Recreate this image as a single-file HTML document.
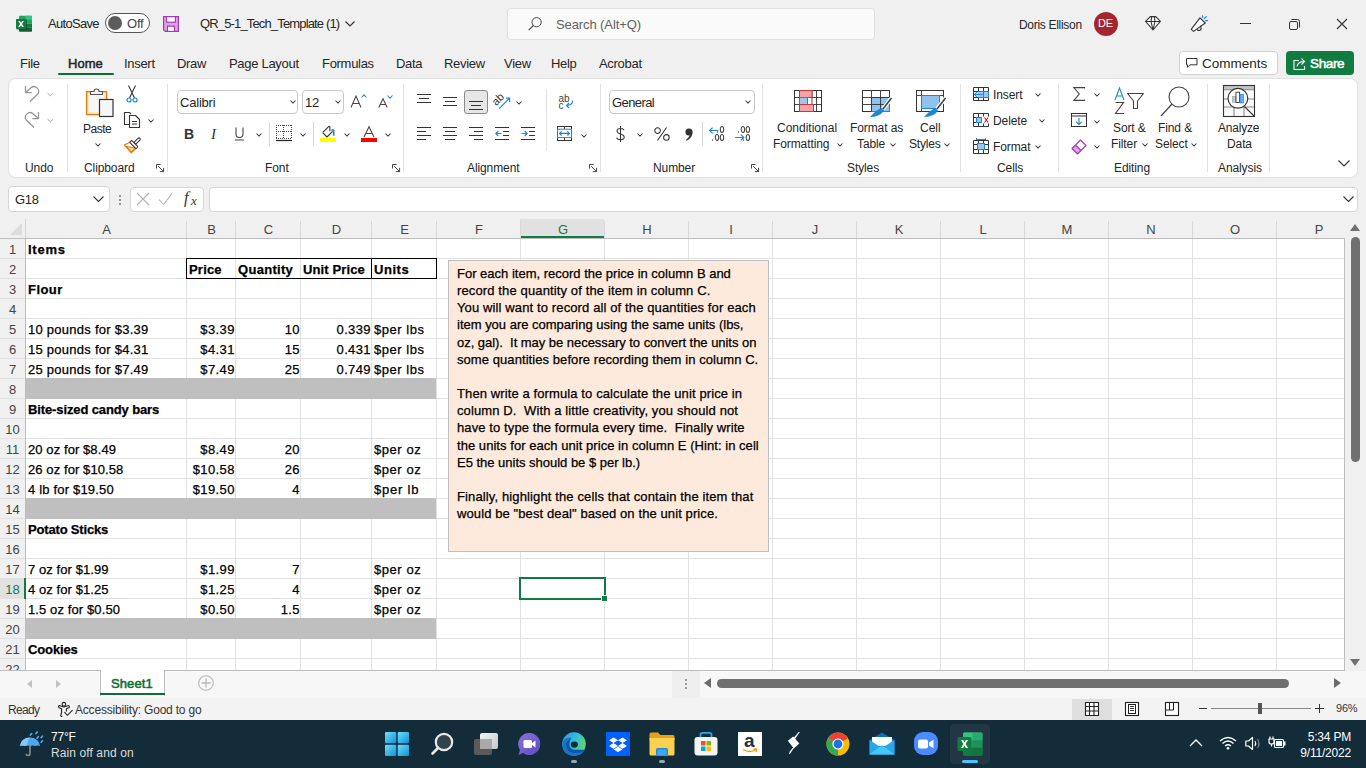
<!DOCTYPE html>
<html><head><meta charset="utf-8"><style>
*{margin:0;padding:0;box-sizing:border-box}
html,body{width:1366px;height:768px;overflow:hidden;background:#f0f0f0;font-family:"Liberation Sans", sans-serif;}
.a{position:absolute}
.t{position:absolute;white-space:pre;line-height:1}
.k{-webkit-text-stroke:0.25px currentColor}
svg{position:absolute;overflow:visible}
</style></head>
<body>
<svg style="left:15px;top:15px" width="18" height="18" viewBox="0 0 18 18"><rect x="4" y="0.8" width="13" height="4" rx="0.8" fill="#21a366"/><rect x="10.5" y="0.8" width="6.5" height="4" rx="0.5" fill="#33c481"/><rect x="4" y="4.8" width="13" height="4" fill="#21a366"/><rect x="4" y="8.8" width="13" height="4" fill="#107c41"/><rect x="4" y="12.8" width="13" height="4" rx="0.8" fill="#185c37"/><rect x="1.5" y="4.3" width="10.5" height="10.5" rx="0.8" fill="#0b3d21" opacity="0.5"/><rect x="1" y="3.9" width="10" height="10" rx="0.8" fill="#107c41"/><path d="M3.2 5.9 H5 L6 7.9 L7.1 5.9 H8.9 L7 8.9 L8.9 11.9 H7.1 L6 9.9 L5 11.9 H3.2 L5.1 8.9 Z" fill="#fff"/></svg>
<div class="t" style="left:48px;top:17px;font-size:13px;color:#262626;font-weight:400;letter-spacing:-0.7px">AutoSave</div>
<div class="a" style="left:105px;top:13px;width:45px;height:20px;border:1px solid #555;border-radius:10px;background:#fff"></div>
<div class="a" style="left:108px;top:16px;width:14px;height:14px;border-radius:7px;background:#5c5c5c"></div>
<div class="t" style="left:127px;top:17px;font-size:13px;color:#444;font-weight:400;letter-spacing:-0.2px">Off</div>
<svg style="left:163px;top:16px" width="16" height="16" viewBox="0 0 16 16"><path d="M0.6 0.6 H15.4 V15.4 H2.2 L0.6 13.8 Z" fill="#dca3e4" stroke="#a634b4" stroke-width="1.2"/><rect x="3.6" y="0.6" width="8.8" height="5.6" fill="#fafafa" stroke="#a634b4" stroke-width="1.1"/><rect x="4.5" y="10.2" width="7" height="5.2" fill="#fafafa" stroke="#a634b4" stroke-width="1.1"/></svg>
<div class="t" style="left:200px;top:17px;font-size:13px;color:#262626;font-weight:400;letter-spacing:-0.85px">QR_5-1_Tech_Template (1)</div>
<svg style="left:345px;top:21px" width="10" height="6" viewBox="0 0 10 6"><path d="M0.5 0.5 L5 5 L9.5 0.5" fill="none" stroke="#333" stroke-width="1.2"/></svg>
<div class="a" style="left:507px;top:8px;width:368px;height:32px;border:1px solid #e0e0e0;border-radius:4px;background:#fafafa"></div>
<svg style="left:528px;top:16px" width="14" height="15" viewBox="0 0 14 15"><circle cx="8.6" cy="6.2" r="4.6" fill="none" stroke="#444" stroke-width="1"/><path d="M5.4 9.5 L0.7 14.2" stroke="#444" stroke-width="1.1"/></svg>
<div class="t" style="left:556px;top:18px;font-size:13px;color:#616161;font-weight:400;letter-spacing:-0.1px">Search (Alt+Q)</div>
<div class="t" style="left:1019px;top:19px;font-size:12px;color:#262626;font-weight:400;letter-spacing:-0.3px">Doris Ellison</div>
<div class="a" style="left:1094px;top:12px;width:24px;height:24px;border-radius:12px;background:#a4262c"></div>
<div class="t" style="left:1098px;top:18px;font-size:11px;color:#fff;font-weight:400;letter-spacing:-0.3px">DE</div>
<svg style="left:1145px;top:16px" width="16" height="15" viewBox="0 0 16 15"><path d="M5.2 0.6 H10.8 L15.4 5.4 L8 14 L0.6 5.4 Z M0.6 5.4 H15.4 M6.8 0.6 L6 5.4 L8 14 M9.2 0.6 L10 5.4 L8 14" fill="#fafafa" stroke="#333" stroke-width="1.05" stroke-linejoin="round"/></svg>
<svg style="left:1190px;top:15px" width="19" height="18" viewBox="0 0 19 18"><path d="M1.2 14.4 L10 2.8 L15.3 8 L3.6 16.4 Z" fill="#fafafa" stroke="#333" stroke-width="1.1" stroke-linejoin="round"/><path d="M7 14.2 A2.1 2.1 0 0 0 10.9 12.4 L10.5 10.6" fill="none" stroke="#333" stroke-width="1.1"/><path d="M12.5 0.9 L12.7 2.3 M14.3 3.7 L16.3 1.7 M15.8 5.6 H17.6" stroke="#1b7fd6" stroke-width="1.2" stroke-linecap="round"/></svg>
<div class="a" style="left:1240px;top:23px;width:11px;height:1px;background:#333"></div>
<svg style="left:1289px;top:19px" width="11" height="11" viewBox="0 0 11 11"><rect x="0.5" y="2.5" width="8" height="8" rx="1.5" fill="none" stroke="#333" stroke-width="1"/><path d="M2.5 0.5 H8.5 Q10.5 0.5 10.5 2.5 V8.5" fill="none" stroke="#333" stroke-width="1"/></svg>
<svg style="left:1336px;top:18px" width="12" height="12" viewBox="0 0 12 12"><path d="M1 1 L11 11 M11 1 L1 11" stroke="#333" stroke-width="1.1"/></svg>
<div class="t" style="left:20px;top:57px;font-size:13px;color:#262626;font-weight:400;letter-spacing:-0.3px">File</div>
<div class="t" style="left:68px;top:57px;font-size:13px;color:#262626;font-weight:400;letter-spacing:0.05px;-webkit-text-stroke:0.5px #262626">Home</div>
<div class="t" style="left:124px;top:57px;font-size:13px;color:#262626;font-weight:400;letter-spacing:-0.3px">Insert</div>
<div class="t" style="left:177px;top:57px;font-size:13px;color:#262626;font-weight:400;letter-spacing:-0.3px">Draw</div>
<div class="t" style="left:229px;top:57px;font-size:13px;color:#262626;font-weight:400;letter-spacing:-0.3px">Page Layout</div>
<div class="t" style="left:322px;top:57px;font-size:13px;color:#262626;font-weight:400;letter-spacing:-0.3px">Formulas</div>
<div class="t" style="left:396px;top:57px;font-size:13px;color:#262626;font-weight:400;letter-spacing:-0.3px">Data</div>
<div class="t" style="left:444px;top:57px;font-size:13px;color:#262626;font-weight:400;letter-spacing:-0.3px">Review</div>
<div class="t" style="left:504px;top:57px;font-size:13px;color:#262626;font-weight:400;letter-spacing:-0.3px">View</div>
<div class="t" style="left:551px;top:57px;font-size:13px;color:#262626;font-weight:400;letter-spacing:-0.3px">Help</div>
<div class="t" style="left:599px;top:57px;font-size:13px;color:#262626;font-weight:400;letter-spacing:-0.3px">Acrobat</div>
<div class="a" style="left:58px;top:73px;width:56px;height:2px;background:#0e6e37;border-radius:1px"></div>
<div class="a" style="left:1179px;top:51px;width:99px;height:24px;border:1px solid #d1d1d1;border-radius:4px;background:#fff"></div>
<svg style="left:1186px;top:58px" width="12" height="10" viewBox="0 0 12 10"><path d="M0.5 0.5 H11 V6.8 H4 L1.5 9.2 V6.8 H0.5 Z" fill="none" stroke="#333" stroke-width="1" stroke-linejoin="round"/></svg>
<div class="t" style="left:1202px;top:57px;font-size:13.5px;color:#262626;font-weight:400;letter-spacing:0px">Comments</div>
<div class="a" style="left:1286px;top:51px;width:68px;height:24px;border-radius:4px;background:#107c41"></div>
<svg style="left:1293px;top:57px" width="14" height="13" viewBox="0 0 14 13"><path d="M6 3.5 H1 V12.5 H11.5 V9" fill="none" stroke="#fff" stroke-width="1.1"/><path d="M4 9.5 Q5 4.5 11 4.5 M8.5 1.5 L11.5 4.5 L8.5 7.5" fill="none" stroke="#fff" stroke-width="1.1"/></svg>
<div class="t" style="left:1310px;top:57px;font-size:13.5px;color:#fff;font-weight:400;letter-spacing:-0.35px;-webkit-text-stroke:0.5px #fff">Share</div>
<div class="a" style="left:8px;top:78px;width:1350px;height:100px;border:1px solid #e1e1e1;border-radius:8px;background:#fff"></div>
<div class="a" style="left:67px;top:84px;width:1px;height:88px;background:#e1e1e1"></div>
<div class="a" style="left:167px;top:84px;width:1px;height:88px;background:#e1e1e1"></div>
<div class="a" style="left:403px;top:84px;width:1px;height:88px;background:#e1e1e1"></div>
<div class="a" style="left:600px;top:84px;width:1px;height:88px;background:#e1e1e1"></div>
<div class="a" style="left:762px;top:84px;width:1px;height:88px;background:#e1e1e1"></div>
<div class="a" style="left:960px;top:84px;width:1px;height:88px;background:#e1e1e1"></div>
<div class="a" style="left:1058px;top:84px;width:1px;height:88px;background:#e1e1e1"></div>
<div class="a" style="left:1207px;top:84px;width:1px;height:88px;background:#e1e1e1"></div>
<div class="a" style="left:1269px;top:84px;width:1px;height:88px;background:#e1e1e1"></div>
<svg style="left:20px;top:82px" width="40" height="50" viewBox="0 0 40 50"><path d="M5.5 4 V10.5 H11.7 M5.5 10.5 L11 5.7 A4.7 4.7 0 0 1 17.6 12.3 L10 19.5 M18.5 30 V36.5 H12.3 M18.5 36.5 L13 31.7 A4.7 4.7 0 0 0 6.4 38.3 L14 45.5" fill="none" stroke="#959595" stroke-width="1.25"/><path d="M27.5 11.2 L30.3 13.8 L33.1 11.2 M27.5 37.2 L30.3 39.8 L33.1 37.2" fill="none" stroke="#a0a0a0" stroke-width="0.9"/></svg>
<svg style="left:85px;top:86px" width="29" height="32" viewBox="0 0 29 32"><rect x="1.6" y="5.6" width="20" height="23" fill="#fbe7a8" stroke="#e8780f" stroke-width="1.3"/><rect x="3.5" y="7.5" width="16" height="19" fill="#f7f7f7"/><path d="M5.5 8.5 V5.5 H9 A2.5 2.5 0 0 1 14 5.5 H17.5 V8.5 Z" fill="#f7f7f7" stroke="#555" stroke-width="1.1" stroke-linejoin="round"/><rect x="14.5" y="13.5" width="13.5" height="17" fill="#f7f7f7" stroke="#333" stroke-width="1.2"/></svg>
<div class="t" style="left:83px;top:123px;font-size:12px;color:#262626;font-weight:400;letter-spacing:-0.5px">Paste</div>
<svg style="left:94.5px;top:143px" width="6" height="4.0" viewBox="0 0 6 4.0"><path d="M0.5 0.5 L3.0 3.0 L5.5 0.5" fill="none" stroke="#333" stroke-width="1.05"/></svg>
<svg style="left:126px;top:85px" width="12" height="18" viewBox="0 0 12 18"><path d="M2.5 0.5 L8.5 13 M9.5 0.5 L3.5 13" stroke="#333" stroke-width="1.1"/><circle cx="3" cy="15" r="2" fill="#fff" stroke="#1c86d4" stroke-width="1.2"/><circle cx="9" cy="15" r="2" fill="#fff" stroke="#1c86d4" stroke-width="1.2"/></svg>
<svg style="left:123px;top:111px" width="18" height="18" viewBox="0 0 18 18"><path d="M6.5 13.5 H1.5 V1.5 H6.5 L8 3" fill="none" stroke="#333" stroke-width="1.1"/><path d="M6.5 4.5 H12.5 L16.5 8.5 V16.5 H6.5 Z" fill="#fff" stroke="#333" stroke-width="1.1" stroke-linejoin="round"/><path d="M9 10.5 H14 M9 13 H14" stroke="#333" stroke-width="1"/></svg>
<svg style="left:147.5px;top:119px" width="6" height="4.0" viewBox="0 0 6 4.0"><path d="M0.5 0.5 L3.0 3.0 L5.5 0.5" fill="none" stroke="#333" stroke-width="1.05"/></svg>
<svg style="left:123px;top:137px" width="18" height="17" viewBox="0 0 18 17"><path d="M1.3 8 L7.9 4.7 L13.5 10.9 L8.2 15.7 Z" fill="#fff" stroke="#e8780f" stroke-width="1.2" stroke-linejoin="round"/><path d="M3.2 9.4 Q8 10 12.4 11.3 L8.2 15 Z" fill="#fbe08a" stroke="#e8780f" stroke-width="1.05" stroke-linejoin="round"/><rect x="-3.6" y="-1.3" width="7.2" height="2.6" rx="1.3" transform="translate(14.3 3.9) rotate(-45)" fill="#fff" stroke="#333" stroke-width="1.05"/><rect x="-4.6" y="-1.4" width="9.2" height="2.8" rx="0.9" transform="translate(10.8 7.6) rotate(45)" fill="#fff" stroke="#333" stroke-width="1.05"/></svg>
<svg style="left:156px;top:164px" width="9" height="9" viewBox="0 0 9 9"><path d="M0.5 4.5 V0.5 H4.5 M2.2 2.2 L7.6 7.6 M7.6 3.8 V7.6 H3.8" fill="none" stroke="#444" stroke-width="1"/></svg>
<div class="a" style="left:177px;top:90px;width:121px;height:24px;border:1px solid #c8c8c8;border-radius:4px;background:#fff"></div>
<div class="t" style="left:180px;top:96px;font-size:13px;color:#262626;font-weight:400;letter-spacing:-0.2px">Calibri</div>
<svg style="left:289.5px;top:100px" width="6" height="4.0" viewBox="0 0 6 4.0"><path d="M0.5 0.5 L3.0 3.0 L5.5 0.5" fill="none" stroke="#333" stroke-width="1.05"/></svg>
<div class="a" style="left:302px;top:90px;width:42px;height:24px;border:1px solid #c8c8c8;border-radius:4px;background:#fff"></div>
<div class="t" style="left:305px;top:96px;font-size:13px;color:#262626;font-weight:400;letter-spacing:-0.3px">12</div>
<svg style="left:334.5px;top:100px" width="6" height="4.0" viewBox="0 0 6 4.0"><path d="M0.5 0.5 L3.0 3.0 L5.5 0.5" fill="none" stroke="#333" stroke-width="1.05"/></svg>
<svg style="left:350px;top:95px" width="13" height="13" viewBox="0 0 13 13"><path d="M1 12.5 L6 1 L11 12.5 M2.8 8.5 H9.2" fill="none" stroke="#444" stroke-width="1.05"/></svg>
<svg style="left:361px;top:94px" width="6" height="4" viewBox="0 0 6 4"><path d="M0.5 3.5 L3 0.8 L5.5 3.5" fill="none" stroke="#1c86d4" stroke-width="1.1"/></svg>
<svg style="left:378px;top:98px" width="11" height="10" viewBox="0 0 11 10"><path d="M0.8 9.5 L5 0.8 L9.2 9.5 M2.3 6.5 H7.7" fill="none" stroke="#444" stroke-width="1.05"/></svg>
<svg style="left:387px;top:95px" width="6" height="4" viewBox="0 0 6 4"><path d="M0.5 0.5 L3 3.2 L5.5 0.5" fill="none" stroke="#1c86d4" stroke-width="1.1"/></svg>
<div class="t" style="left:184px;top:127px;font-size:14px;color:#333;font-weight:700;">B</div>
<div class="t" style="left:211px;top:127px;font-size:15px;color:#333;font-weight:400;font-family:'Liberation Serif';font-style:italic">I</div>
<svg style="left:234px;top:127px" width="11" height="14" viewBox="0 0 11 14"><path d="M2 0.5 V7 Q2 10.5 5.5 10.5 Q9 10.5 9 7 V0.5 M1 13 H10" fill="none" stroke="#444" stroke-width="1.1"/></svg>
<svg style="left:255.5px;top:133px" width="6" height="4.0" viewBox="0 0 6 4.0"><path d="M0.5 0.5 L3.0 3.0 L5.5 0.5" fill="none" stroke="#333" stroke-width="1.05"/></svg>
<div class="a" style="left:269px;top:122px;width:1px;height:24px;background:#d6d6d6"></div>
<svg style="left:276px;top:125px" width="16" height="17" viewBox="0 0 16 17"><path d="M0 0.5 H16 M0 6.5 H16 M0 13.5 H16 M0.5 0 V14 M7.5 0 V14 M15.5 0 V14" fill="none" stroke="#444" stroke-width="1" stroke-dasharray="1 1"/><path d="M0 15.5 H16" stroke="#222" stroke-width="1.2"/></svg>
<svg style="left:299.5px;top:133px" width="6" height="4.0" viewBox="0 0 6 4.0"><path d="M0.5 0.5 L3.0 3.0 L5.5 0.5" fill="none" stroke="#333" stroke-width="1.05"/></svg>
<div class="a" style="left:313px;top:122px;width:1px;height:24px;background:#d6d6d6"></div>
<svg style="left:320px;top:124px" width="17" height="18" viewBox="0 0 17 18"><path d="M2.6 8.6 L8.6 2.6 Q9.7 1.6 9.9 3.2 V7.2 M8.6 2.6 M2.6 8.6 L7 13 L12.6 7.4" fill="#fafafa" stroke="#333" stroke-width="1.1" stroke-linejoin="round"/><path d="M11.6 6.6 Q12.8 4.6 13.8 6.8 V11.8" fill="none" stroke="#1c86d4" stroke-width="1.5"/><rect x="0" y="14" width="16" height="4" fill="#ffff00"/></svg>
<svg style="left:343.5px;top:133px" width="6" height="4.0" viewBox="0 0 6 4.0"><path d="M0.5 0.5 L3.0 3.0 L5.5 0.5" fill="none" stroke="#333" stroke-width="1.05"/></svg>
<svg style="left:363px;top:126px" width="12" height="12" viewBox="0 0 12 12"><path d="M1 11 L6 0.8 L11 11 M2.8 7.5 H9.2" fill="none" stroke="#444" stroke-width="1.05"/></svg>
<div class="a" style="left:361px;top:138px;width:16px;height:4px;background:#f00"></div>
<svg style="left:384.5px;top:133px" width="6" height="4.0" viewBox="0 0 6 4.0"><path d="M0.5 0.5 L3.0 3.0 L5.5 0.5" fill="none" stroke="#333" stroke-width="1.05"/></svg>
<svg style="left:392px;top:164px" width="9" height="9" viewBox="0 0 9 9"><path d="M0.5 4.5 V0.5 H4.5 M2.2 2.2 L7.6 7.6 M7.6 3.8 V7.6 H3.8" fill="none" stroke="#444" stroke-width="1"/></svg>
<div class="a" style="left:417px;top:94px;width:14px;height:1px;background:#333"></div>
<div class="a" style="left:419px;top:98px;width:10px;height:1px;background:#333"></div>
<div class="a" style="left:417px;top:102px;width:14px;height:1px;background:#333"></div>
<div class="a" style="left:443px;top:97px;width:14px;height:1px;background:#333"></div>
<div class="a" style="left:445px;top:101px;width:10px;height:1px;background:#333"></div>
<div class="a" style="left:443px;top:105px;width:14px;height:1px;background:#333"></div>
<div class="a" style="left:464px;top:90px;width:24px;height:24px;border:1px solid #8a8a8a;border-radius:3px;background:#e6e6e6"></div>
<div class="a" style="left:469px;top:101px;width:14px;height:1px;background:#333"></div>
<div class="a" style="left:471px;top:105px;width:10px;height:1px;background:#333"></div>
<div class="a" style="left:469px;top:109px;width:14px;height:1px;background:#333"></div>
<svg style="left:494px;top:93px" width="18" height="18" viewBox="0 0 18 18"><text x="2.2" y="13.2" font-size="11" font-family="Liberation Sans" fill="#333" transform="rotate(-45 2.2 13.2)">ab</text><path d="M5.2 15.6 L15.4 5.4 M11.9 5.2 H15.6 V8.9" fill="none" stroke="#1c86d4" stroke-width="1.2"/></svg>
<svg style="left:515.5px;top:101px" width="6" height="4.0" viewBox="0 0 6 4.0"><path d="M0.5 0.5 L3.0 3.0 L5.5 0.5" fill="none" stroke="#333" stroke-width="1.05"/></svg>
<div class="a" style="left:417px;top:127px;width:14px;height:1px;background:#333"></div>
<div class="a" style="left:417px;top:131px;width:9px;height:1px;background:#333"></div>
<div class="a" style="left:417px;top:135px;width:14px;height:1px;background:#333"></div>
<div class="a" style="left:417px;top:139px;width:9px;height:1px;background:#333"></div>
<div class="a" style="left:443px;top:127px;width:14px;height:1px;background:#333"></div>
<div class="a" style="left:445px;top:131px;width:10px;height:1px;background:#333"></div>
<div class="a" style="left:443px;top:135px;width:14px;height:1px;background:#333"></div>
<div class="a" style="left:445px;top:139px;width:10px;height:1px;background:#333"></div>
<div class="a" style="left:469px;top:127px;width:14px;height:1px;background:#333"></div>
<div class="a" style="left:474px;top:131px;width:9px;height:1px;background:#333"></div>
<div class="a" style="left:469px;top:135px;width:14px;height:1px;background:#333"></div>
<div class="a" style="left:474px;top:139px;width:9px;height:1px;background:#333"></div>
<div class="a" style="left:495px;top:127px;width:14px;height:1px;background:#333"></div>
<div class="a" style="left:495px;top:139px;width:14px;height:1px;background:#333"></div>
<div class="a" style="left:503px;top:131px;width:6px;height:1px;background:#333"></div>
<div class="a" style="left:503px;top:135px;width:6px;height:1px;background:#333"></div>
<svg style="left:495px;top:130px" width="7" height="7" viewBox="0 0 7 7"><path d="M6.5 3.5 H0.8 M3.3 1 L0.8 3.5 L3.3 6" fill="none" stroke="#1c86d4" stroke-width="1.1"/></svg>
<div class="a" style="left:521px;top:127px;width:14px;height:1px;background:#333"></div>
<div class="a" style="left:521px;top:139px;width:14px;height:1px;background:#333"></div>
<div class="a" style="left:529px;top:131px;width:6px;height:1px;background:#333"></div>
<div class="a" style="left:529px;top:135px;width:6px;height:1px;background:#333"></div>
<svg style="left:521px;top:130px" width="7" height="7" viewBox="0 0 7 7"><path d="M0.5 3.5 H6.2 M3.7 1 L6.2 3.5 L3.7 6" fill="none" stroke="#1c86d4" stroke-width="1.1"/></svg>
<div class="a" style="left:546px;top:89px;width:1px;height:62px;background:#e1e1e1"></div>
<svg style="left:558px;top:93px" width="16" height="18" viewBox="0 0 16 18"><text x="0.5" y="8.7" font-size="10" font-family="Liberation Sans" fill="#444">ab</text><text x="0.5" y="16" font-size="10" font-family="Liberation Sans" fill="#444">c</text><path d="M14.5 7.5 Q15 12 8.5 12.5 M11 10 L8.5 12.5 L11 15" fill="none" stroke="#1c86d4" stroke-width="1.1"/></svg>
<svg style="left:557px;top:126px" width="15" height="15" viewBox="0 0 15 15"><rect x="0.5" y="0.5" width="14" height="14" fill="#fff" stroke="#333" stroke-width="1"/><path d="M7.5 0.5 V3.5 M7.5 11.5 V14.5" stroke="#333"/><rect x="0.5" y="3.2" width="14" height="8.4" fill="#fff" stroke="#1c86d4" stroke-width="1"/><path d="M2.5 7.4 H12.5 M4.6 5.3 L2.5 7.4 L4.6 9.5 M10.4 5.3 L12.5 7.4 L10.4 9.5" fill="none" stroke="#1c86d4" stroke-width="1.1"/></svg>
<svg style="left:580.5px;top:134px" width="6" height="4.0" viewBox="0 0 6 4.0"><path d="M0.5 0.5 L3.0 3.0 L5.5 0.5" fill="none" stroke="#333" stroke-width="1.05"/></svg>
<svg style="left:589px;top:164px" width="9" height="9" viewBox="0 0 9 9"><path d="M0.5 4.5 V0.5 H4.5 M2.2 2.2 L7.6 7.6 M7.6 3.8 V7.6 H3.8" fill="none" stroke="#444" stroke-width="1"/></svg>
<div class="a" style="left:609px;top:90px;width:146px;height:24px;border:1px solid #c8c8c8;border-radius:4px;background:#fff"></div>
<div class="t" style="left:612px;top:96px;font-size:13px;color:#262626;font-weight:400;letter-spacing:-0.6px">General</div>
<svg style="left:744.5px;top:100px" width="6" height="4.0" viewBox="0 0 6 4.0"><path d="M0.5 0.5 L3.0 3.0 L5.5 0.5" fill="none" stroke="#333" stroke-width="1.05"/></svg>
<svg style="left:616px;top:126px" width="9" height="16" viewBox="0 0 9 16"><path d="M8 4.2 Q7.5 2.5 4.5 2.5 Q1 2.5 1 5 Q1 7 4.5 8 Q8.2 9 8.2 11.3 Q8.2 13.7 4.5 13.7 Q1.2 13.7 0.7 11.7 M4.5 0 V16" fill="none" stroke="#333" stroke-width="1.05"/></svg>
<svg style="left:636.5px;top:133px" width="6" height="4.0" viewBox="0 0 6 4.0"><path d="M0.5 0.5 L3.0 3.0 L5.5 0.5" fill="none" stroke="#333" stroke-width="1.05"/></svg>
<svg style="left:654px;top:127px" width="16" height="14" viewBox="0 0 16 14"><circle cx="3.6" cy="3.6" r="2.8" fill="none" stroke="#333" stroke-width="1.05"/><circle cx="12.4" cy="10.4" r="2.8" fill="none" stroke="#333" stroke-width="1.05"/><path d="M12.5 0.5 L3.5 13.5" stroke="#333" stroke-width="1.05"/></svg>
<svg style="left:685px;top:128px" width="8" height="13" viewBox="0 0 8 13"><circle cx="4" cy="4" r="3.6" fill="#333"/><path d="M7.4 4.5 Q7.5 10 1.5 12.8 L1 12 Q4.5 9.5 4.8 6.5 Z" fill="#333"/></svg>
<div class="a" style="left:702px;top:122px;width:1px;height:24px;background:#d6d6d6"></div>
<svg style="left:708px;top:125px" width="18" height="17" viewBox="0 0 18 17"><g fill="none" stroke="#444" stroke-width="1.05"><ellipse cx="14" cy="4.4" rx="1.7" ry="3"/><ellipse cx="9" cy="12.4" rx="1.7" ry="3"/><ellipse cx="14" cy="12.4" rx="1.7" ry="3"/></g><circle cx="9.6" cy="7" r="0.65" fill="#444"/><circle cx="4.5" cy="15" r="0.65" fill="#444"/><path d="M10.2 5.5 H1.6 M4.6 2.6 L1.6 5.5 L4.6 8.4" fill="none" stroke="#1c86d4" stroke-width="1.2"/></svg>
<svg style="left:734px;top:125px" width="18" height="17" viewBox="0 0 18 17"><g fill="none" stroke="#444" stroke-width="1.05"><ellipse cx="8.9" cy="4.4" rx="1.7" ry="3"/><ellipse cx="13.9" cy="4.4" rx="1.7" ry="3"/><ellipse cx="13.9" cy="12.4" rx="1.7" ry="3"/></g><circle cx="4.4" cy="7" r="0.65" fill="#444"/><circle cx="9.5" cy="15" r="0.65" fill="#444"/><path d="M1.1 12.5 H9.8 M6.8 9.6 L9.8 12.5 L6.8 15.4" fill="none" stroke="#1c86d4" stroke-width="1.2"/></svg>
<svg style="left:751px;top:164px" width="9" height="9" viewBox="0 0 9 9"><path d="M0.5 4.5 V0.5 H4.5 M2.2 2.2 L7.6 7.6 M7.6 3.8 V7.6 H3.8" fill="none" stroke="#444" stroke-width="1"/></svg>
<svg style="left:794px;top:90px" width="28" height="22" viewBox="0 0 28 22"><rect x="0.5" y="0.5" width="27" height="21" fill="#fff" stroke="#333" stroke-width="1"/><path d="M0.5 7.5 H27.5 M0.5 14.5 H27.5 M5.5 0.5 V21.5 M18 0.5 V21.5 M22.5 0.5 V21.5" stroke="#333" stroke-width="0.9" fill="none"/><rect x="5.5" y="0.5" width="12.5" height="7" fill="#f4a3a8" stroke="#d13438" stroke-width="1"/><rect x="5.5" y="7.5" width="8" height="7" fill="#9ac8f0" stroke="#1c86d4" stroke-width="1"/><rect x="5.5" y="14.5" width="14" height="7" fill="#f4a3a8" stroke="#d13438" stroke-width="1"/></svg>
<div class="t" style="left:777px;top:122px;font-size:12px;color:#262626;font-weight:400;letter-spacing:0px">Conditional</div>
<div class="t" style="left:773px;top:138px;font-size:12px;color:#262626;font-weight:400;letter-spacing:-0.1px">Formatting</div>
<svg style="left:836.5px;top:143px" width="6" height="4.0" viewBox="0 0 6 4.0"><path d="M0.5 0.5 L3.0 3.0 L5.5 0.5" fill="none" stroke="#333" stroke-width="1.05"/></svg>
<svg style="left:862px;top:90px" width="31" height="28" viewBox="0 0 31 28"><rect x="0.5" y="0.5" width="27" height="21" fill="#fff" stroke="#333" stroke-width="1"/><rect x="9.5" y="7.5" width="18" height="14" fill="#8ec3f0" stroke="#1c86d4" stroke-width="1"/><path d="M0.5 7.5 H27.5 M0.5 14.5 H27.5 M9.5 0.5 V21.5 M18.5 0.5 V21.5" stroke="#333" stroke-width="0.9" fill="none"/><path d="M29.5 8 L21 19" stroke="#fff" stroke-width="4"/><path d="M29.5 8 L21 19" stroke="#444" stroke-width="1.6"/><path d="M20 18 Q15 19 8 27 Q17 27 22 21 Z" fill="#1c86d4"/></svg>
<div class="t" style="left:850px;top:122px;font-size:12px;color:#262626;font-weight:400;letter-spacing:-0.1px">Format as</div>
<div class="t" style="left:857px;top:138px;font-size:12px;color:#262626;font-weight:400;letter-spacing:-0.1px">Table</div>
<svg style="left:889.5px;top:143px" width="6" height="4.0" viewBox="0 0 6 4.0"><path d="M0.5 0.5 L3.0 3.0 L5.5 0.5" fill="none" stroke="#333" stroke-width="1.05"/></svg>
<svg style="left:916px;top:90px" width="31" height="28" viewBox="0 0 31 28"><rect x="0.5" y="0.5" width="27" height="21" fill="#fff" stroke="#333" stroke-width="1"/><path d="M0.5 5.5 H27.5 M5.5 0.5 V21.5" stroke="#333" stroke-width="0.9" fill="none"/><rect x="5.5" y="5.5" width="18" height="13" fill="#8ec3f0" stroke="#1c86d4" stroke-width="1"/><path d="M29.5 8 L21 19" stroke="#fff" stroke-width="4"/><path d="M29.5 8 L21 19" stroke="#444" stroke-width="1.6"/><path d="M20 18 Q15 19 8 27 Q17 27 22 21 Z" fill="#1c86d4"/></svg>
<div class="t" style="left:920px;top:122px;font-size:12px;color:#262626;font-weight:400;">Cell</div>
<div class="t" style="left:909px;top:138px;font-size:12px;color:#262626;font-weight:400;letter-spacing:-0.2px">Styles</div>
<svg style="left:943.5px;top:143px" width="6" height="4.0" viewBox="0 0 6 4.0"><path d="M0.5 0.5 L3.0 3.0 L5.5 0.5" fill="none" stroke="#333" stroke-width="1.05"/></svg>
<svg style="left:973px;top:87px" width="16" height="14" viewBox="0 0 16 14"><path d="M0.5 0.5 H15.5 V13.5 H0.5 Z M5.5 0.5 V4.5 M10.5 0.5 V4.5 M5.5 10.5 V13.5 M10.5 10.5 V13.5 M0.5 4.5 H5.5 M0.5 10.5 H15.5" fill="none" stroke="#333" stroke-width="1"/><rect x="5.5" y="4.5" width="10" height="6" fill="#9ac8f0" stroke="#1c86d4"/><path d="M10.5 4.5 V10.5" stroke="#1c86d4"/><rect x="1" y="5" width="4.5" height="5" fill="#fff"/><path d="M9.5 7.5 H1.5 M4.2 4.8 L1.5 7.5 L4.2 10.2" fill="none" stroke="#1c86d4" stroke-width="1.1"/></svg>
<div class="t" style="left:993px;top:89px;font-size:12px;color:#262626;font-weight:400;letter-spacing:-0.1px">Insert</div>
<svg style="left:1034.5px;top:93px" width="6" height="4.0" viewBox="0 0 6 4.0"><path d="M0.5 0.5 L3.0 3.0 L5.5 0.5" fill="none" stroke="#333" stroke-width="1.05"/></svg>
<svg style="left:973px;top:113px" width="16" height="14" viewBox="0 0 16 14"><path d="M0.5 0.5 H15.5 M0.5 13.5 H15.5 M0.5 0.5 V13.5 M5.5 0.5 V4.5 M10.5 0.5 V3.5 M5.5 9.5 V13.5 M10.5 10.5 V13.5 M0.5 4.5 H3.5 M0.5 9.5 H3.5 M15.5 0.5 V3.5 M15.5 10.5 V13.5" fill="none" stroke="#333" stroke-width="1"/><rect x="3.5" y="4.5" width="5" height="5" fill="#9ac8f0" stroke="#1c86d4"/><path d="M11.5 4.5 L15.2 9.5 M15.2 4.5 L11.5 9.5" stroke="#e81123" stroke-width="1.1"/></svg>
<div class="t" style="left:993px;top:115px;font-size:12px;color:#262626;font-weight:400;letter-spacing:-0.1px">Delete</div>
<svg style="left:1038.5px;top:119px" width="6" height="4.0" viewBox="0 0 6 4.0"><path d="M0.5 0.5 L3.0 3.0 L5.5 0.5" fill="none" stroke="#333" stroke-width="1.05"/></svg>
<svg style="left:973px;top:138px" width="16" height="16" viewBox="0 0 16 16"><path d="M3.5 0 V2.5 M12.5 0 V2.5 M3.5 1.5 H12.5" fill="none" stroke="#1c86d4" stroke-width="1"/><path d="M0.5 2.5 H15.5 V15.5 H0.5 Z M0.5 6.5 H15.5 M0.5 11.5 H15.5 M5.5 2.5 V15.5 M10.5 2.5 V15.5" fill="none" stroke="#333" stroke-width="1"/><rect x="4.5" y="5.5" width="7" height="6" fill="#9ac8f0" stroke="#1c86d4"/></svg>
<div class="t" style="left:993px;top:141px;font-size:12px;color:#262626;font-weight:400;letter-spacing:-0.1px">Format</div>
<svg style="left:1034.5px;top:145px" width="6" height="4.0" viewBox="0 0 6 4.0"><path d="M0.5 0.5 L3.0 3.0 L5.5 0.5" fill="none" stroke="#333" stroke-width="1.05"/></svg>
<svg style="left:1073px;top:87px" width="12" height="14" viewBox="0 0 12 14"><path d="M11.5 1.5 V0.6 H0.8 L6.3 7 L0.8 13.4 H11.5 V12.5" fill="none" stroke="#444" stroke-width="1.1" stroke-linejoin="miter"/></svg>
<svg style="left:1093.5px;top:93px" width="6" height="4.0" viewBox="0 0 6 4.0"><path d="M0.5 0.5 L3.0 3.0 L5.5 0.5" fill="none" stroke="#333" stroke-width="1.05"/></svg>
<svg style="left:1071px;top:113px" width="16" height="14" viewBox="0 0 16 14"><rect x="0.5" y="0.5" width="15" height="13" fill="#fff" stroke="#333"/><path d="M0.5 3 H15.5" stroke="#333"/><path d="M8 5 V11.5 M5.2 8.8 L8 11.5 L10.8 8.8" fill="none" stroke="#1c86d4" stroke-width="1.1"/></svg>
<svg style="left:1093.5px;top:120px" width="6" height="4.0" viewBox="0 0 6 4.0"><path d="M0.5 0.5 L3.0 3.0 L5.5 0.5" fill="none" stroke="#333" stroke-width="1.05"/></svg>
<svg style="left:1071px;top:139px" width="16" height="15" viewBox="0 0 16 15"><path d="M1 9.5 L4.5 6 L10 11.5 L6.5 15 Z" fill="#dba6e3"/><path d="M1 9.5 L9.5 1 L15 6.5 L6.5 15 Z M4.5 6 L10 11.5" fill="none" stroke="#a634b4" stroke-width="1.1" stroke-linejoin="round"/></svg>
<svg style="left:1093.5px;top:145px" width="6" height="4.0" viewBox="0 0 6 4.0"><path d="M0.5 0.5 L3.0 3.0 L5.5 0.5" fill="none" stroke="#333" stroke-width="1.05"/></svg>
<svg style="left:1114px;top:87px" width="31" height="28" viewBox="0 0 31 28"><path d="M1 13 L5.5 1 L10 13 M2.5 9 H8.5" fill="none" stroke="#1c86d4" stroke-width="1.1"/><path d="M1.5 15.5 H9.5 L1.5 26.5 H10" fill="none" stroke="#444" stroke-width="1.1"/><path d="M13.5 6.5 H29.5 L23.5 14 V21.5 H19.5 V14 Z" fill="#fff" stroke="#444" stroke-width="1.1" stroke-linejoin="round"/></svg>
<div class="t" style="left:1113px;top:122px;font-size:12px;color:#262626;font-weight:400;letter-spacing:-0.1px">Sort &amp;</div>
<div class="t" style="left:1111px;top:138px;font-size:12px;color:#262626;font-weight:400;letter-spacing:-0.1px">Filter</div>
<svg style="left:1141.5px;top:143px" width="6" height="4.0" viewBox="0 0 6 4.0"><path d="M0.5 0.5 L3.0 3.0 L5.5 0.5" fill="none" stroke="#333" stroke-width="1.05"/></svg>
<svg style="left:1160px;top:86px" width="31" height="31" viewBox="0 0 31 31"><circle cx="19" cy="11" r="10" fill="#fff" stroke="#444" stroke-width="1.1"/><path d="M12 18 L1 30" stroke="#444" stroke-width="1.2"/></svg>
<div class="t" style="left:1158px;top:122px;font-size:12px;color:#262626;font-weight:400;letter-spacing:-0.1px">Find &amp;</div>
<div class="t" style="left:1155px;top:138px;font-size:12px;color:#262626;font-weight:400;letter-spacing:-0.1px">Select</div>
<svg style="left:1190.5px;top:143px" width="6" height="4.0" viewBox="0 0 6 4.0"><path d="M0.5 0.5 L3.0 3.0 L5.5 0.5" fill="none" stroke="#333" stroke-width="1.05"/></svg>
<svg style="left:1223px;top:85px" width="32" height="32" viewBox="0 0 32 32"><rect x="0.5" y="0.5" width="31" height="31" fill="#fafafa"/><rect x="1" y="1" width="30" height="3.8" fill="#c4c4c4"/><path d="M0.5 4.8 H31.5 M0.5 14 H31.5 M0.5 22 H31.5 M11 22 V31.5 M21 22 V31.5" stroke="#8a8a8a" stroke-width="1.1"/><rect x="0.5" y="0.5" width="31" height="31" fill="none" stroke="#333" stroke-width="1.1"/><circle cx="14.9" cy="13.3" r="9.9" fill="#fff" stroke="#333" stroke-width="1.2"/><rect x="9.6" y="11.5" width="3.2" height="5.8" fill="#c8c8c8" stroke="#999" stroke-width="0.6"/><rect x="13" y="7.2" width="3.6" height="10.2" fill="#fff" stroke="#333" stroke-width="0.9"/><rect x="17.1" y="9.3" width="3.2" height="8.6" fill="#6cb2ec" stroke="#1c86d4" stroke-width="0.8"/><path d="M21.6 21.6 L31.4 31.4" stroke="#333" stroke-width="1.3"/></svg>
<div class="t" style="left:1218px;top:122px;font-size:12px;color:#262626;font-weight:400;letter-spacing:-0.2px">Analyze</div>
<div class="t" style="left:1227px;top:138px;font-size:12px;color:#262626;font-weight:400;letter-spacing:-0.1px">Data</div>
<svg style="left:1338px;top:160px" width="12" height="7" viewBox="0 0 12 7"><path d="M0.5 0.5 L6 6 L11.5 0.5" fill="none" stroke="#333" stroke-width="1.1"/></svg>
<div class="t" style="left:25px;top:162px;font-size:12px;color:#262626;font-weight:400;letter-spacing:-0.1px">Undo</div>
<div class="t" style="left:84px;top:162px;font-size:12px;color:#262626;font-weight:400;letter-spacing:-0.1px">Clipboard</div>
<div class="t" style="left:265px;top:162px;font-size:12px;color:#262626;font-weight:400;letter-spacing:-0.1px">Font</div>
<div class="t" style="left:467px;top:162px;font-size:12px;color:#262626;font-weight:400;letter-spacing:-0.1px">Alignment</div>
<div class="t" style="left:653px;top:162px;font-size:12px;color:#262626;font-weight:400;letter-spacing:-0.1px">Number</div>
<div class="t" style="left:847px;top:162px;font-size:12px;color:#262626;font-weight:400;letter-spacing:-0.1px">Styles</div>
<div class="t" style="left:997px;top:162px;font-size:12px;color:#262626;font-weight:400;letter-spacing:-0.1px">Cells</div>
<div class="t" style="left:1114px;top:162px;font-size:12px;color:#262626;font-weight:400;letter-spacing:-0.1px">Editing</div>
<div class="t" style="left:1218px;top:162px;font-size:12px;color:#262626;font-weight:400;letter-spacing:-0.1px">Analysis</div>
<div class="a" style="left:8px;top:186px;width:102px;height:26px;border:1px solid #d6d6d6;border-radius:4px;background:#fff"></div>
<div class="t" style="left:15px;top:193px;font-size:13px;color:#262626;font-weight:400;letter-spacing:-0.3px">G18</div>
<svg style="left:93px;top:196px" width="11" height="6" viewBox="0 0 11 6"><path d="M0.5 0.5 L5.5 5.5 L10.5 0.5" fill="none" stroke="#333" stroke-width="1.1"/></svg>
<div class="a" style="left:119px;top:195px;width:2px;height:2px;background:#777;border-radius:1px"></div>
<div class="a" style="left:119px;top:199px;width:2px;height:2px;background:#777;border-radius:1px"></div>
<div class="a" style="left:119px;top:203px;width:2px;height:2px;background:#777;border-radius:1px"></div>
<div class="a" style="left:130px;top:187px;width:74px;height:25px;border:1px solid #d6d6d6;border-radius:4px;background:#fff"></div>
<svg style="left:136px;top:192px" width="14" height="14" viewBox="0 0 14 14"><path d="M1 1 L13 13 M13 1 L1 13" stroke="#b3b3b3" stroke-width="1.1"/></svg>
<svg style="left:158px;top:192px" width="15" height="14" viewBox="0 0 15 14"><path d="M1 7.5 L5.5 12.5 L14 1.5" fill="none" stroke="#b3b3b3" stroke-width="1.1"/></svg>
<div class="t" style="left:184px;top:190px;font-size:16px;color:#333;font-weight:400;font-family:'Liberation Serif';font-style:italic">f</div>
<div class="t" style="left:191px;top:194px;font-size:13px;color:#333;font-weight:400;font-family:'Liberation Serif';font-style:italic">x</div>
<div class="a" style="left:209px;top:187px;width:1149px;height:25px;border:1px solid #d6d6d6;border-radius:4px;background:#fff"></div>
<svg style="left:1343px;top:196px" width="11" height="6" viewBox="0 0 11 6"><path d="M0.5 0.5 L5.5 5.5 L10.5 0.5" fill="none" stroke="#333" stroke-width="1.1"/></svg>
<div class="a" style="left:25px;top:238px;width:1320px;height:433px;background:#fff"></div>
<div class="a" style="left:520px;top:219px;width:84px;height:19px;background:#e1e1e1"></div>
<div class="a" style="left:520px;top:236px;width:84px;height:2px;background:#107c41"></div>
<div class="a" style="left:0px;top:579px;width:25px;height:19px;background:#e1e1e1"></div>
<div class="a" style="left:25px;top:221px;width:1px;height:17px;background:#d9d9d9"></div>
<div class="t" style="left:26px;top:223px;width:161px;text-align:center;font-size:13px;color:#444">A</div>
<div class="a" style="left:186px;top:221px;width:1px;height:17px;background:#d9d9d9"></div>
<div class="t" style="left:187px;top:223px;width:49px;text-align:center;font-size:13px;color:#444">B</div>
<div class="a" style="left:235px;top:221px;width:1px;height:17px;background:#d9d9d9"></div>
<div class="t" style="left:236px;top:223px;width:65px;text-align:center;font-size:13px;color:#444">C</div>
<div class="a" style="left:300px;top:221px;width:1px;height:17px;background:#d9d9d9"></div>
<div class="t" style="left:301px;top:223px;width:71px;text-align:center;font-size:13px;color:#444">D</div>
<div class="a" style="left:371px;top:221px;width:1px;height:17px;background:#d9d9d9"></div>
<div class="t" style="left:372px;top:223px;width:65px;text-align:center;font-size:13px;color:#444">E</div>
<div class="a" style="left:436px;top:221px;width:1px;height:17px;background:#d9d9d9"></div>
<div class="t" style="left:437px;top:223px;width:84px;text-align:center;font-size:13px;color:#444">F</div>
<div class="a" style="left:520px;top:221px;width:1px;height:17px;background:#d9d9d9"></div>
<div class="t" style="left:521px;top:223px;width:84px;text-align:center;font-size:13px;color:#107c41">G</div>
<div class="a" style="left:604px;top:221px;width:1px;height:17px;background:#d9d9d9"></div>
<div class="t" style="left:605px;top:223px;width:84px;text-align:center;font-size:13px;color:#444">H</div>
<div class="a" style="left:688px;top:221px;width:1px;height:17px;background:#d9d9d9"></div>
<div class="t" style="left:689px;top:223px;width:84px;text-align:center;font-size:13px;color:#444">I</div>
<div class="a" style="left:772px;top:221px;width:1px;height:17px;background:#d9d9d9"></div>
<div class="t" style="left:773px;top:223px;width:84px;text-align:center;font-size:13px;color:#444">J</div>
<div class="a" style="left:856px;top:221px;width:1px;height:17px;background:#d9d9d9"></div>
<div class="t" style="left:857px;top:223px;width:84px;text-align:center;font-size:13px;color:#444">K</div>
<div class="a" style="left:940px;top:221px;width:1px;height:17px;background:#d9d9d9"></div>
<div class="t" style="left:941px;top:223px;width:84px;text-align:center;font-size:13px;color:#444">L</div>
<div class="a" style="left:1024px;top:221px;width:1px;height:17px;background:#d9d9d9"></div>
<div class="t" style="left:1025px;top:223px;width:84px;text-align:center;font-size:13px;color:#444">M</div>
<div class="a" style="left:1108px;top:221px;width:1px;height:17px;background:#d9d9d9"></div>
<div class="t" style="left:1109px;top:223px;width:84px;text-align:center;font-size:13px;color:#444">N</div>
<div class="a" style="left:1192px;top:221px;width:1px;height:17px;background:#d9d9d9"></div>
<div class="t" style="left:1193px;top:223px;width:84px;text-align:center;font-size:13px;color:#444">O</div>
<div class="a" style="left:1276px;top:221px;width:1px;height:17px;background:#d9d9d9"></div>
<div class="t" style="left:1277px;top:223px;width:84px;text-align:center;font-size:13px;color:#444">P</div>
<div class="a" style="left:186px;top:238px;width:1px;height:433px;background:#e1e1e1"></div>
<div class="a" style="left:235px;top:238px;width:1px;height:433px;background:#e1e1e1"></div>
<div class="a" style="left:300px;top:238px;width:1px;height:433px;background:#e1e1e1"></div>
<div class="a" style="left:371px;top:238px;width:1px;height:433px;background:#e1e1e1"></div>
<div class="a" style="left:436px;top:238px;width:1px;height:433px;background:#e1e1e1"></div>
<div class="a" style="left:520px;top:238px;width:1px;height:433px;background:#e1e1e1"></div>
<div class="a" style="left:604px;top:238px;width:1px;height:433px;background:#e1e1e1"></div>
<div class="a" style="left:688px;top:238px;width:1px;height:433px;background:#e1e1e1"></div>
<div class="a" style="left:772px;top:238px;width:1px;height:433px;background:#e1e1e1"></div>
<div class="a" style="left:856px;top:238px;width:1px;height:433px;background:#e1e1e1"></div>
<div class="a" style="left:940px;top:238px;width:1px;height:433px;background:#e1e1e1"></div>
<div class="a" style="left:1024px;top:238px;width:1px;height:433px;background:#e1e1e1"></div>
<div class="a" style="left:1108px;top:238px;width:1px;height:433px;background:#e1e1e1"></div>
<div class="a" style="left:1192px;top:238px;width:1px;height:433px;background:#e1e1e1"></div>
<div class="a" style="left:1276px;top:238px;width:1px;height:433px;background:#e1e1e1"></div>
<div class="a" style="left:0px;top:258px;width:1345px;height:1px;background:#e1e1e1"></div>
<div class="t" style="left:0px;top:243px;width:25px;text-align:center;font-size:13px;color:#444">1</div>
<div class="a" style="left:0px;top:278px;width:1345px;height:1px;background:#e1e1e1"></div>
<div class="t" style="left:0px;top:263px;width:25px;text-align:center;font-size:13px;color:#444">2</div>
<div class="a" style="left:0px;top:298px;width:1345px;height:1px;background:#e1e1e1"></div>
<div class="t" style="left:0px;top:283px;width:25px;text-align:center;font-size:13px;color:#444">3</div>
<div class="a" style="left:0px;top:318px;width:1345px;height:1px;background:#e1e1e1"></div>
<div class="t" style="left:0px;top:303px;width:25px;text-align:center;font-size:13px;color:#444">4</div>
<div class="a" style="left:0px;top:338px;width:1345px;height:1px;background:#e1e1e1"></div>
<div class="t" style="left:0px;top:323px;width:25px;text-align:center;font-size:13px;color:#444">5</div>
<div class="a" style="left:0px;top:358px;width:1345px;height:1px;background:#e1e1e1"></div>
<div class="t" style="left:0px;top:343px;width:25px;text-align:center;font-size:13px;color:#444">6</div>
<div class="a" style="left:0px;top:378px;width:1345px;height:1px;background:#e1e1e1"></div>
<div class="t" style="left:0px;top:363px;width:25px;text-align:center;font-size:13px;color:#444">7</div>
<div class="a" style="left:0px;top:398px;width:1345px;height:1px;background:#e1e1e1"></div>
<div class="t" style="left:0px;top:383px;width:25px;text-align:center;font-size:13px;color:#444">8</div>
<div class="a" style="left:0px;top:418px;width:1345px;height:1px;background:#e1e1e1"></div>
<div class="t" style="left:0px;top:403px;width:25px;text-align:center;font-size:13px;color:#444">9</div>
<div class="a" style="left:0px;top:438px;width:1345px;height:1px;background:#e1e1e1"></div>
<div class="t" style="left:0px;top:423px;width:25px;text-align:center;font-size:13px;color:#444">10</div>
<div class="a" style="left:0px;top:458px;width:1345px;height:1px;background:#e1e1e1"></div>
<div class="t" style="left:0px;top:443px;width:25px;text-align:center;font-size:13px;color:#444">11</div>
<div class="a" style="left:0px;top:478px;width:1345px;height:1px;background:#e1e1e1"></div>
<div class="t" style="left:0px;top:463px;width:25px;text-align:center;font-size:13px;color:#444">12</div>
<div class="a" style="left:0px;top:498px;width:1345px;height:1px;background:#e1e1e1"></div>
<div class="t" style="left:0px;top:483px;width:25px;text-align:center;font-size:13px;color:#444">13</div>
<div class="a" style="left:0px;top:518px;width:1345px;height:1px;background:#e1e1e1"></div>
<div class="t" style="left:0px;top:503px;width:25px;text-align:center;font-size:13px;color:#444">14</div>
<div class="a" style="left:0px;top:538px;width:1345px;height:1px;background:#e1e1e1"></div>
<div class="t" style="left:0px;top:523px;width:25px;text-align:center;font-size:13px;color:#444">15</div>
<div class="a" style="left:0px;top:558px;width:1345px;height:1px;background:#e1e1e1"></div>
<div class="t" style="left:0px;top:543px;width:25px;text-align:center;font-size:13px;color:#444">16</div>
<div class="a" style="left:0px;top:578px;width:1345px;height:1px;background:#e1e1e1"></div>
<div class="t" style="left:0px;top:563px;width:25px;text-align:center;font-size:13px;color:#444">17</div>
<div class="a" style="left:0px;top:598px;width:1345px;height:1px;background:#e1e1e1"></div>
<div class="t" style="left:0px;top:583px;width:25px;text-align:center;font-size:13px;color:#107c41">18</div>
<div class="a" style="left:0px;top:618px;width:1345px;height:1px;background:#e1e1e1"></div>
<div class="t" style="left:0px;top:603px;width:25px;text-align:center;font-size:13px;color:#444">19</div>
<div class="a" style="left:0px;top:638px;width:1345px;height:1px;background:#e1e1e1"></div>
<div class="t" style="left:0px;top:623px;width:25px;text-align:center;font-size:13px;color:#444">20</div>
<div class="a" style="left:0px;top:658px;width:1345px;height:1px;background:#e1e1e1"></div>
<div class="t" style="left:0px;top:643px;width:25px;text-align:center;font-size:13px;color:#444">21</div>
<div class="t" style="left:0px;top:663px;width:25px;text-align:center;font-size:13px;color:#444">22</div>
<div class="a" style="left:0px;top:238px;width:1345px;height:1px;background:#bdbdbd"></div>
<div class="a" style="left:25px;top:219px;width:1px;height:19px;background:#d6d6d6"></div>
<div class="a" style="left:25px;top:238px;width:1px;height:433px;background:#bdbdbd"></div>
<div class="a" style="left:1344px;top:238px;width:1px;height:433px;background:#bdbdbd"></div>
<div class="a" style="left:24px;top:578px;width:2px;height:21px;background:#107c41"></div>
<svg style="left:10px;top:223px" width="12" height="12" viewBox="0 0 12 12"><path d="M12 0 V12 H0 Z" fill="#dcdcdc"/></svg>
<div class="a" style="left:26px;top:378px;width:410px;height:21px;background:#bfbfbf"></div>
<div class="a" style="left:26px;top:498px;width:410px;height:21px;background:#bfbfbf"></div>
<div class="a" style="left:26px;top:618px;width:410px;height:21px;background:#bfbfbf"></div>
<div class="a" style="left:186px;top:258px;width:251px;height:21px;border:1px solid #000"></div>
<div class="a" style="left:371px;top:258px;width:1px;height:21px;background:#000"></div>
<div class="t k" style="left:28px;top:243px;font-size:13px;font-weight:700;color:#000;letter-spacing:0.75px">Items</div>
<div class="t k" style="left:189px;top:263px;font-size:13px;font-weight:700;color:#000;letter-spacing:0.2px">Price</div>
<div class="t k" style="left:238px;top:263px;font-size:13px;font-weight:700;color:#000;letter-spacing:0.29px">Quantity</div>
<div class="t k" style="left:303px;top:263px;font-size:13px;font-weight:700;color:#000;letter-spacing:0.13px">Unit Price</div>
<div class="t k" style="left:374px;top:263px;font-size:13px;font-weight:700;color:#000;letter-spacing:0.53px">Units</div>
<div class="t k" style="left:28px;top:283px;font-size:13px;font-weight:700;color:#000;letter-spacing:0.45px">Flour</div>
<div class="t k" style="left:28px;top:323px;font-size:13px;font-weight:400;color:#000;letter-spacing:0.26px">10 pounds for $3.39</div>
<div class="t k" style="left:34.90px;top:323px;width:200px;text-align:right;font-size:13px;font-weight:400;color:#000;letter-spacing:0.4px">$3.39</div>
<div class="t k" style="left:99.80px;top:323px;width:200px;text-align:right;font-size:13px;font-weight:400;color:#000;letter-spacing:0.3px">10</div>
<div class="t k" style="left:170.85px;top:323px;width:200px;text-align:right;font-size:13px;font-weight:400;color:#000;letter-spacing:0.35px">0.339</div>
<div class="t k" style="left:374px;top:323px;font-size:13px;font-weight:400;color:#000;letter-spacing:0.53px">$per lbs</div>
<div class="t k" style="left:28px;top:343px;font-size:13px;font-weight:400;color:#000;letter-spacing:0.26px">15 pounds for $4.31</div>
<div class="t k" style="left:34.90px;top:343px;width:200px;text-align:right;font-size:13px;font-weight:400;color:#000;letter-spacing:0.4px">$4.31</div>
<div class="t k" style="left:99.80px;top:343px;width:200px;text-align:right;font-size:13px;font-weight:400;color:#000;letter-spacing:0.3px">15</div>
<div class="t k" style="left:170.85px;top:343px;width:200px;text-align:right;font-size:13px;font-weight:400;color:#000;letter-spacing:0.35px">0.431</div>
<div class="t k" style="left:374px;top:343px;font-size:13px;font-weight:400;color:#000;letter-spacing:0.53px">$per lbs</div>
<div class="t k" style="left:28px;top:363px;font-size:13px;font-weight:400;color:#000;letter-spacing:0.26px">25 pounds for $7.49</div>
<div class="t k" style="left:34.90px;top:363px;width:200px;text-align:right;font-size:13px;font-weight:400;color:#000;letter-spacing:0.4px">$7.49</div>
<div class="t k" style="left:99.80px;top:363px;width:200px;text-align:right;font-size:13px;font-weight:400;color:#000;letter-spacing:0.3px">25</div>
<div class="t k" style="left:170.85px;top:363px;width:200px;text-align:right;font-size:13px;font-weight:400;color:#000;letter-spacing:0.35px">0.749</div>
<div class="t k" style="left:374px;top:363px;font-size:13px;font-weight:400;color:#000;letter-spacing:0.53px">$per lbs</div>
<div class="t k" style="left:28px;top:443px;font-size:13px;font-weight:400;color:#000;letter-spacing:0.086px">20 oz for $8.49</div>
<div class="t k" style="left:34.90px;top:443px;width:200px;text-align:right;font-size:13px;font-weight:400;color:#000;letter-spacing:0.4px">$8.49</div>
<div class="t k" style="left:99.80px;top:443px;width:200px;text-align:right;font-size:13px;font-weight:400;color:#000;letter-spacing:0.3px">20</div>
<div class="t k" style="left:374px;top:443px;font-size:13px;font-weight:400;color:#000;letter-spacing:0.55px">$per oz</div>
<div class="t k" style="left:28px;top:463px;font-size:13px;font-weight:400;color:#000;letter-spacing:0.087px">26 oz for $10.58</div>
<div class="t k" style="left:34.90px;top:463px;width:200px;text-align:right;font-size:13px;font-weight:400;color:#000;letter-spacing:0.4px">$10.58</div>
<div class="t k" style="left:99.80px;top:463px;width:200px;text-align:right;font-size:13px;font-weight:400;color:#000;letter-spacing:0.3px">26</div>
<div class="t k" style="left:374px;top:463px;font-size:13px;font-weight:400;color:#000;letter-spacing:0.55px">$per oz</div>
<div class="t k" style="left:28px;top:483px;font-size:13px;font-weight:400;color:#000;letter-spacing:0.18px">4 lb for $19.50</div>
<div class="t k" style="left:34.90px;top:483px;width:200px;text-align:right;font-size:13px;font-weight:400;color:#000;letter-spacing:0.4px">$19.50</div>
<div class="t k" style="left:99.80px;top:483px;width:200px;text-align:right;font-size:13px;font-weight:400;color:#000;letter-spacing:0.3px">4</div>
<div class="t k" style="left:374px;top:483px;font-size:13px;font-weight:400;color:#000;letter-spacing:0.78px">$per lb</div>
<div class="t k" style="left:28px;top:563px;font-size:13px;font-weight:400;color:#000;letter-spacing:0.077px">7 oz for $1.99</div>
<div class="t k" style="left:34.90px;top:563px;width:200px;text-align:right;font-size:13px;font-weight:400;color:#000;letter-spacing:0.4px">$1.99</div>
<div class="t k" style="left:99.80px;top:563px;width:200px;text-align:right;font-size:13px;font-weight:400;color:#000;letter-spacing:0.3px">7</div>
<div class="t k" style="left:374px;top:563px;font-size:13px;font-weight:400;color:#000;letter-spacing:0.55px">$per oz</div>
<div class="t k" style="left:28px;top:583px;font-size:13px;font-weight:400;color:#000;letter-spacing:0.077px">4 oz for $1.25</div>
<div class="t k" style="left:34.90px;top:583px;width:200px;text-align:right;font-size:13px;font-weight:400;color:#000;letter-spacing:0.4px">$1.25</div>
<div class="t k" style="left:99.80px;top:583px;width:200px;text-align:right;font-size:13px;font-weight:400;color:#000;letter-spacing:0.3px">4</div>
<div class="t k" style="left:374px;top:583px;font-size:13px;font-weight:400;color:#000;letter-spacing:0.55px">$per oz</div>
<div class="t k" style="left:28px;top:603px;font-size:13px;font-weight:400;color:#000;letter-spacing:0.107px">1.5 oz for $0.50</div>
<div class="t k" style="left:34.90px;top:603px;width:200px;text-align:right;font-size:13px;font-weight:400;color:#000;letter-spacing:0.4px">$0.50</div>
<div class="t k" style="left:99.80px;top:603px;width:200px;text-align:right;font-size:13px;font-weight:400;color:#000;letter-spacing:0.3px">1.5</div>
<div class="t k" style="left:374px;top:603px;font-size:13px;font-weight:400;color:#000;letter-spacing:0.55px">$per oz</div>
<div class="t k" style="left:28px;top:403px;font-size:13px;font-weight:700;color:#000;letter-spacing:-0.12px">Bite-sized candy bars</div>
<div class="t k" style="left:28px;top:523px;font-size:13px;font-weight:700;color:#000;letter-spacing:-0.17px">Potato Sticks</div>
<div class="t k" style="left:28px;top:643px;font-size:13px;font-weight:700;color:#000;letter-spacing:-0.13px">Cookies</div>
<div class="a" style="left:519px;top:577px;width:87px;height:23px;border:2px solid #107c41"></div>
<div class="a" style="left:601px;top:595px;width:7px;height:7px;background:#107c41;border:1px solid #fff"></div>
<div class="a" style="left:448px;top:260px;width:321px;height:292px;background:#fdeadc;border:1px solid #bfbfbf"></div>
<div class="t k" style="left:457px;top:266.80px;font-size:13px;color:#000;letter-spacing:0px">For each item, record the price in column B and</div>
<div class="t k" style="left:457px;top:283.98px;font-size:13px;color:#000;letter-spacing:0.128px">record the quantity of the item in column C.</div>
<div class="t k" style="left:457px;top:301.16px;font-size:13px;color:#000;letter-spacing:0.123px">You will want to record all of the quantities for each</div>
<div class="t k" style="left:457px;top:318.34px;font-size:13px;color:#000;letter-spacing:-0.008px">item you are comparing using the same units (lbs,</div>
<div class="t k" style="left:457px;top:335.52px;font-size:13px;color:#000;letter-spacing:-0.036px">oz, gal). &nbsp;It may be necessary to convert the units on</div>
<div class="t k" style="left:457px;top:352.70px;font-size:13px;color:#000;letter-spacing:0.072px">some quantities before recording them in column C.</div>
<div class="t k" style="left:457px;top:387.06px;font-size:13px;color:#000;letter-spacing:0.108px">Then write a formula to calculate the unit price in</div>
<div class="t k" style="left:457px;top:404.24px;font-size:13px;color:#000;letter-spacing:0.118px">column D. &nbsp;With a little creativity, you should not</div>
<div class="t k" style="left:457px;top:421.42px;font-size:13px;color:#000;letter-spacing:0.102px">have to type the formula every time. &nbsp;Finally write</div>
<div class="t k" style="left:457px;top:438.60px;font-size:13px;color:#000;letter-spacing:0.047px">the units for each unit price in column E (Hint: in cell</div>
<div class="t k" style="left:457px;top:455.78px;font-size:13px;color:#000;letter-spacing:-0.015px">E5 the units should be $ per lb.)</div>
<div class="t k" style="left:457px;top:490.14px;font-size:13px;color:#000;letter-spacing:0.126px">Finally, highlight the cells that contain the item that</div>
<div class="t k" style="left:457px;top:507.32px;font-size:13px;color:#000;letter-spacing:0.102px">would be "best deal" based on the unit price.</div>
<div class="a" style="left:1345px;top:219px;width:21px;height:452px;background:#f0f0f0"></div>
<svg style="left:1350px;top:223px" width="10" height="8" viewBox="0 0 10 8"><path d="M0 8 L5 1 L10 8 Z" fill="#707070"/></svg>
<div class="a" style="left:1351px;top:237px;width:9px;height:225px;border-radius:5px;background:#707070"></div>
<svg style="left:1350px;top:659px" width="10" height="8" viewBox="0 0 10 8"><path d="M0 0 L5 7 L10 0 Z" fill="#707070"/></svg>
<div class="a" style="left:0px;top:671px;width:1366px;height:27px;background:#f7f7f7"></div>
<div class="a" style="left:0px;top:670px;width:1345px;height:1px;background:#bdbdbd"></div>
<svg style="left:27px;top:680px" width="5" height="8" viewBox="0 0 5 8"><path d="M5 0 V8 L0 4 Z" fill="#c0c0c0"/></svg>
<svg style="left:56px;top:680px" width="5" height="8" viewBox="0 0 5 8"><path d="M0 0 V8 L5 4 Z" fill="#c0c0c0"/></svg>
<div class="a" style="left:100px;top:670px;width:65px;height:26px;background:#fff;border-left:1px solid #bdbdbd;border-right:1px solid #bdbdbd"></div>
<div class="a" style="left:100px;top:693px;width:65px;height:2px;background:#0e6e37"></div>
<div class="t" style="left:111px;top:677px;font-size:13px;color:#0e6e37;font-weight:400;letter-spacing:0.1px;-webkit-text-stroke:0.55px #0e6e37">Sheet1</div>
<svg style="left:198px;top:675px" width="16" height="16" viewBox="0 0 16 16"><circle cx="8" cy="8" r="7.3" fill="none" stroke="#b8b8b8" stroke-width="1.1"/><path d="M8 3.5 V12.5 M3.5 8 H12.5" stroke="#b8b8b8" stroke-width="1.3"/></svg>
<div class="a" style="left:672px;top:671px;width:28px;height:27px;background:#efefef"></div>
<div class="a" style="left:685px;top:679px;width:2px;height:2px;background:#999"></div>
<div class="a" style="left:685px;top:683px;width:2px;height:2px;background:#999"></div>
<div class="a" style="left:685px;top:687px;width:2px;height:2px;background:#999"></div>
<svg style="left:704px;top:678px" width="7" height="10" viewBox="0 0 7 10"><path d="M7 0 V10 L0 5 Z" fill="#6b6b6b"/></svg>
<div class="a" style="left:717px;top:679px;width:572px;height:9px;border-radius:5px;background:#707070"></div>
<svg style="left:1334px;top:678px" width="7" height="10" viewBox="0 0 7 10"><path d="M0 0 V10 L7 5 Z" fill="#6b6b6b"/></svg>
<div class="a" style="left:0px;top:698px;width:1366px;height:22px;background:#f3f3f3"></div>
<div class="t" style="left:8px;top:704px;font-size:12px;color:#333;font-weight:400;letter-spacing:-0.7px">Ready</div>
<svg style="left:57px;top:701px" width="18" height="17" viewBox="0 0 18 17"><circle cx="6.9" cy="3.2" r="1.8" fill="none" stroke="#222" stroke-width="1.1"/><path d="M1.6 6.4 Q1 4.4 3 4.7 L6.9 6.1 L10.8 4.7 Q12.8 4.4 12.2 6.4 L9.4 7.8 V10.4 M1.6 6.4 L4.6 7.8 V11.5 L3.7 14.3 Q3.7 15.7 5.3 15.3" fill="none" stroke="#222" stroke-width="1.1" stroke-linejoin="round"/><path d="M7.4 11.2 L10.4 14.3 L15.6 9.1" fill="none" stroke="#222" stroke-width="1.1"/></svg>
<div class="t" style="left:75px;top:704px;font-size:12px;color:#333;font-weight:400;letter-spacing:-0.2px">Accessibility: Good to go</div>
<div class="a" style="left:1072px;top:699px;width:40px;height:21px;background:#dedede"></div>
<svg style="left:1085px;top:702px" width="14" height="14" viewBox="0 0 14 14"><rect x="0.5" y="0.5" width="13" height="13" fill="#fff"/><path d="M0.5 0.5 H13.5 V13.5 H0.5 Z M0.5 4.5 H13.5 M0.5 9 H13.5 M4.5 0.5 V13.5 M9 0.5 V13.5" fill="none" stroke="#222" stroke-width="1.1"/></svg>
<svg style="left:1125px;top:702px" width="14" height="14" viewBox="0 0 14 14"><rect x="0.5" y="0.5" width="13" height="13" fill="#fff" stroke="#222" stroke-width="1.1"/><rect x="3.5" y="2.5" width="7" height="9" fill="#fff" stroke="#222" stroke-width="1"/><path d="M5 4.5 H9 M5 6.5 H9 M5 8.5 H9" stroke="#222" stroke-width="0.9"/></svg>
<svg style="left:1165px;top:702px" width="14" height="14" viewBox="0 0 14 14"><rect x="0.5" y="0.5" width="13" height="13" fill="#fff" stroke="#222" stroke-width="1.1"/><path d="M4.5 0.5 V8 M8.5 0.5 V8 H0.5" fill="none" stroke="#222" stroke-width="1"/></svg>
<div class="a" style="left:1199px;top:708px;width:8px;height:1px;background:#333"></div>
<div class="a" style="left:1211px;top:708px;width:100px;height:1px;background:#888"></div>
<div class="a" style="left:1258px;top:703px;width:4px;height:11px;background:#555"></div>
<div class="a" style="left:1315px;top:708px;width:9px;height:1px;background:#333"></div>
<div class="a" style="left:1319px;top:704px;width:1px;height:9px;background:#333"></div>
<div class="t" style="left:1336px;top:703px;font-size:11px;color:#333;font-weight:400;letter-spacing:-0.2px">96%</div>
<div class="a" style="left:0px;top:720px;width:1366px;height:48px;background:#122c39"></div>
<svg style="left:19px;top:730px" width="26" height="27" viewBox="0 0 26 27"><path d="M0.8 16 Q2.5 7.5 11 7.5 Q19.5 7.5 21.2 16 Q19 15 16.5 16 Q13.8 15 11 16 Q8.2 15 5.5 16 Q3 15 0.8 16 Z" fill="#4ea6ec"/><path d="M0.8 16 Q2.5 7.5 11 7.5 Q8.5 10 8 16 Q6.8 15 5.5 16 Q3 15 0.8 16 Z" fill="#86c8f5"/><path d="M11 16 V23.8 Q11 25.5 9 25.5 Q7.2 25.5 7.2 23.8" fill="none" stroke="#8c8c8c" stroke-width="1.6"/><path d="M12.6 3.6 L11.4 5 M18.2 2.1 L17 3.5 M19.3 6.7 L18.1 8.1 M23.4 6.2 L22.2 7.6 M23.4 10.8 L22.2 12.2" stroke="#4ea6ec" stroke-width="1.7" stroke-linecap="round"/></svg>
<div class="t" style="left:51px;top:731px;font-size:12px;color:#fff;font-weight:400;letter-spacing:-0.2px">77°F</div>
<div class="t" style="left:51px;top:747px;font-size:12px;color:#dcdcdc;font-weight:400;letter-spacing:0.1px">Rain off and on</div>
<svg style="left:385px;top:732px" width="24" height="24" viewBox="0 0 24 24"><defs><linearGradient id="wg" x1="0" y1="0" x2="1" y2="1"><stop offset="0" stop-color="#6ee0fb"/><stop offset="1" stop-color="#0f8fd8"/></linearGradient></defs><rect x="0" y="0" width="11.3" height="11.3" rx="1" fill="url(#wg)"/><rect x="12.7" y="0" width="11.3" height="11.3" rx="1" fill="url(#wg)"/><rect x="0" y="12.7" width="11.3" height="11.3" rx="1" fill="url(#wg)"/><rect x="12.7" y="12.7" width="11.3" height="11.3" rx="1" fill="url(#wg)"/></svg>
<svg style="left:430px;top:732px" width="25" height="24" viewBox="0 0 25 24"><circle cx="14" cy="10" r="8.2" fill="#33434d" stroke="#e8e8e8" stroke-width="2.2"/><path d="M8 16 L2.5 21.5" stroke="#e8e8e8" stroke-width="2.6" stroke-linecap="round"/></svg>
<div class="a" style="left:474px;top:739px;width:18px;height:16px;border-radius:2px;background:#5a5a5a"></div>
<div class="a" style="left:480px;top:733px;width:18px;height:16px;border-radius:2px;background:linear-gradient(135deg,#ffffff,#cfcfcf);opacity:0.95"></div>
<div class="a" style="left:480px;top:739px;width:12px;height:10px;background:#a9a9a9"></div>
<svg style="left:517px;top:732px" width="25" height="24" viewBox="0 0 25 24"><defs><linearGradient id="tg" x1="0" y1="0" x2="1" y2="1"><stop offset="0" stop-color="#8b73e0"/><stop offset="1" stop-color="#5b4bbd"/></linearGradient></defs><path d="M12.5 1 A11 11 0 1 1 6 21 L1.5 23 L3 18 A11 11 0 0 1 12.5 1 Z" fill="url(#tg)"/><rect x="6.5" y="8" width="8.5" height="8" rx="1.5" fill="#fff"/><path d="M15 11 L18.5 8.5 V15.5 L15 13 Z" fill="#fff"/></svg>
<svg style="left:562px;top:732px" width="24" height="24" viewBox="0 0 24 24"><defs><linearGradient id="eg" x1="0" y1="0.2" x2="1" y2="0.6"><stop offset="0" stop-color="#2a9ee6"/><stop offset="0.5" stop-color="#33bcd9"/><stop offset="1" stop-color="#63d86a"/></linearGradient></defs><circle cx="12" cy="12" r="11.8" fill="url(#eg)"/><path d="M0.3 12.5 Q0.8 5 9.5 5.5 Q3.8 7.5 4 13 Q4.5 21 13 21.3 Q19.5 21.2 23.2 16.5 Q20.5 23.8 12 23.8 Q0.5 23.5 0.3 12.5 Z" fill="#1a73c9"/><path d="M4 13 Q4 8 9.5 5.5 Q7 9 7.3 13 Q8 17.8 13 17.8 H23.3 Q20 21.3 13 21.3 Q4.5 21 4 13 Z" fill="#0d55a8"/><ellipse cx="12.3" cy="12.6" rx="3.6" ry="3.1" fill="#122c39"/></svg>
<div class="a" style="left:571px;top:760px;width:6px;height:3px;border-radius:2px;background:#9aa5ad"></div>
<div class="a" style="left:606px;top:732px;width:24px;height:24px;background:#0061fe"></div>
<svg style="left:609px;top:737px" width="18" height="15" viewBox="0 0 18 15"><path d="M4.5 0.5 L9 3.3 L4.5 6.1 L0 3.3 Z M13.5 0.5 L18 3.3 L13.5 6.1 L9 3.3 Z M4.5 6.1 L9 8.9 L4.5 11.7 L0 8.9 Z M13.5 6.1 L18 8.9 L13.5 11.7 L9 8.9 Z M4.5 12.5 L9 9.7 L13.5 12.5 L9 15 Z" fill="#fff"/></svg>
<svg style="left:649px;top:732px" width="26" height="24" viewBox="0 0 26 24"><path d="M0.5 2 Q0.5 0.5 2 0.5 H9 L11.5 3 H24 Q25.5 3 25.5 4.5 V8 H0.5 Z" fill="#e6a317"/><path d="M0.5 6 H25.5 V22 Q25.5 23.5 24 23.5 H2 Q0.5 23.5 0.5 22 Z" fill="#fcd14d"/><rect x="7" y="16" width="12" height="7.5" rx="1.5" fill="#1f8ad8"/><rect x="8.5" y="17.5" width="9" height="6" rx="1" fill="#3ea9f0"/></svg>
<div class="a" style="left:659px;top:760px;width:6px;height:3px;border-radius:2px;background:#9aa5ad"></div>
<svg style="left:694px;top:732px" width="24" height="24" viewBox="0 0 24 24"><path d="M6.5 5 V2.5 Q6.5 0.8 8.5 0.8 H15.5 Q17.5 0.8 17.5 2.5 V5" fill="none" stroke="#2aa5e8" stroke-width="1.8"/><rect x="0.5" y="5" width="23" height="18.5" rx="3" fill="#f3f3f3"/><rect x="7" y="9" width="4.5" height="4.5" fill="#f25022"/><rect x="12.5" y="9" width="4.5" height="4.5" fill="#7fba00"/><rect x="7" y="14.5" width="4.5" height="4.5" fill="#00a4ef"/><rect x="12.5" y="14.5" width="4.5" height="4.5" fill="#ffb900"/></svg>
<div class="a" style="left:738px;top:732px;width:24px;height:24px;background:#fff"></div>
<div class="t" style="left:744px;top:731px;font-size:19px;font-weight:700;color:#232f3e">a</div>
<svg style="left:742px;top:748px" width="16" height="6" viewBox="0 0 16 6"><path d="M1 1.5 Q8 5.5 14 1.5 M11.5 1 L14.5 1 L14 4" fill="none" stroke="#f90" stroke-width="1.3"/></svg>
<svg style="left:786px;top:731px" width="15" height="26" viewBox="0 0 15 26"><path d="M1.8 9.8 L7.2 5.6 L13.3 12.6 L7.9 17.6 Z" fill="#fff"/><path d="M13.3 1 L8.4 8.4 L7.7 7.2 Z M8.6 15.2 L3.6 22.8 L4.2 20.4 Z" fill="#fff" stroke="#fff" stroke-width="0.8" stroke-linejoin="round"/></svg>
<svg style="left:826px;top:732px" width="24" height="24" viewBox="0 0 24 24"><circle cx="12" cy="12" r="11.5" fill="#fbbc04"/><path d="M12 12 L2.04 6.25 A11.5 11.5 0 0 1 21.96 6.25 Z" fill="#ea4335"/><path d="M12 12 L2.04 6.25 A11.5 11.5 0 0 0 12 23.5 Z" fill="#34a853"/><circle cx="12" cy="12" r="5.6" fill="#fff"/><circle cx="12" cy="12" r="4.4" fill="#1a73e8"/></svg>
<svg style="left:869px;top:732px" width="26" height="23" viewBox="0 0 26 23"><path d="M0.5 8 L13 0.5 L25.5 8 V22.5 H0.5 Z" fill="#0f6cbd"/><path d="M3 5 H23 V14 H3 Z" fill="#fff"/><path d="M0.5 8 L13 16 L25.5 8 V22.5 H0.5 Z" fill="#28a8ea"/><path d="M0.5 22.5 L13 13 L25.5 22.5 Z" fill="#50d9ff" opacity="0.7"/></svg>
<div class="a" style="left:914px;top:732px;width:24px;height:23px;border-radius:9px;background:#4a8cff"></div>
<svg style="left:918px;top:739px" width="16" height="10" viewBox="0 0 16 10"><rect x="0" y="0.5" width="10" height="9" rx="2" fill="#fff"/><path d="M11 3.5 L15.5 0.8 V9.2 L11 6.5 Z" fill="#fff"/></svg>
<div class="a" style="left:950px;top:724px;width:40px;height:40px;border-radius:4px;background:#233643"></div>
<svg style="left:957px;top:732px" width="26" height="24" viewBox="0 0 26 24"><rect x="6" y="0.5" width="19.5" height="23" rx="1.5" fill="#21a366"/><rect x="6" y="0.5" width="19.5" height="7.7" rx="1.5" fill="#33c481"/><rect x="6" y="15.8" width="19.5" height="7.7" rx="1.5" fill="#107c41"/><rect x="15.5" y="0.5" width="10" height="23" fill="#185c37" opacity="0.25"/><rect x="0.5" y="5" width="14" height="14" rx="1.5" fill="#107c41"/><path d="M4 8 H6.2 L7.5 10.6 L8.8 8 H11 L8.7 12 L11 16 H8.8 L7.5 13.4 L6.2 16 H4 L6.3 12 Z" fill="#fff"/></svg>
<div class="a" style="left:962px;top:760px;width:16px;height:3px;border-radius:2px;background:#4cc2ff"></div>
<svg style="left:1189px;top:739px" width="14" height="8" viewBox="0 0 14 8"><path d="M1 7 L7 1 L13 7" fill="none" stroke="#fff" stroke-width="1.3"/></svg>
<svg style="left:1219px;top:736px" width="18" height="14" viewBox="0 0 18 14"><path d="M1 5 Q9 -2 17 5 M3.5 7.5 Q9 2.5 14.5 7.5 M6 10 Q9 7.5 12 10" fill="none" stroke="#fff" stroke-width="1.4"/><circle cx="9" cy="12.3" r="1.3" fill="#fff"/></svg>
<svg style="left:1245px;top:736px" width="16" height="15" viewBox="0 0 16 15"><path d="M0.8 5 H3.5 L7.5 1.5 V13.5 L3.5 10 H0.8 Z" fill="none" stroke="#fff" stroke-width="1.2" stroke-linejoin="round"/><path d="M10 5 Q11.5 7.5 10 10" fill="none" stroke="#fff" stroke-width="1.1"/><path d="M12.5 3 Q15.5 7.5 12.5 12" fill="none" stroke="#888" stroke-width="1.1"/></svg>
<svg style="left:1267px;top:736px" width="19" height="14" viewBox="0 0 19 14"><path d="M3 0.5 V3 M6 0.5 V3 M2 3 H7 V6 Q7 8 4.5 8 Q2 8 2 6 Z M4.5 8 V10.5" fill="none" stroke="#fff" stroke-width="1.2"/><rect x="7.5" y="3.5" width="9" height="8" rx="1" fill="none" stroke="#fff" stroke-width="1.2"/><rect x="9" y="5" width="6" height="5" fill="#fff"/><rect x="16.5" y="5.5" width="2" height="4" fill="#fff"/></svg>
<div class="t" style="left:1290px;top:730.5px;width:61px;text-align:right;font-size:12px;color:#fff;letter-spacing:-0.2px">5:34 PM</div>
<div class="t" style="left:1290px;top:747px;width:61px;text-align:right;font-size:12px;color:#fff;letter-spacing:-0.2px">9/11/2022</div>
</body></html>
